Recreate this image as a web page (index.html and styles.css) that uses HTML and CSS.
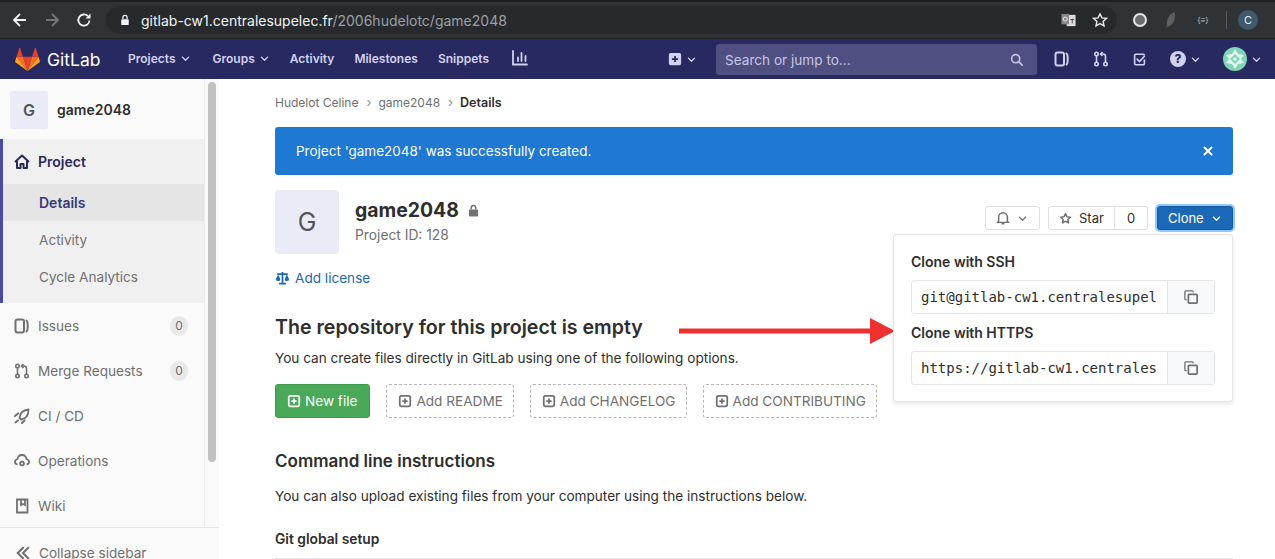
FILE: index.html
```html
<!DOCTYPE html>
<html lang="en">
<head>
    <meta charset="UTF-8">
    <meta name="viewport" content="width=device-width, initial-scale=1.0">
    <title>game2048 - Details</title>
    <link rel="stylesheet" href="styles.css">
</head>
<body>
    <svg class="sprite" width="0" height="0">
        <symbol id="i-chevron" viewBox="0 0 16 16"><path d="M3.500 6 8 10.500 12.500 6" fill="none" stroke="currentColor" stroke-width="2" stroke-linecap="round" stroke-linejoin="round"/></symbol>
        <symbol id="i-issues" viewBox="0 0 16 16"><rect x="1.500" y="1.500" width="8.500" height="13" rx="2" fill="none" stroke="currentColor" stroke-width="2"/><path d="M12.500 2.500c1.600 1 1.600 10 0 11" fill="none" stroke="currentColor" stroke-width="2" stroke-linecap="round"/></symbol>
        <symbol id="i-mr" viewBox="0 0 16 16"><g fill="none" stroke="currentColor" stroke-width="1.600"><circle cx="3.500" cy="13" r="1.700"/><circle cx="3.500" cy="3" r="1.700"/><circle cx="12.500" cy="13" r="1.700"/><path d="M3.500 5v6M12.500 11V5.500c0-1.500-1-2.500-2.500-2.500H8"/><path d="M9.500 1 7.500 3l2 2"/></g></symbol>
        <symbol id="i-todo" viewBox="0 0 16 16"><path d="M14 3a1.500 1.500 0 0 0-1.500-1.500h-9A1.500 1.500 0 0 0 2 3v10a1.500 1.500 0 0 0 1.500 1.500h9A1.500 1.500 0 0 0 14 13V8" fill="none" stroke="currentColor" stroke-width="2"/><path d="m5 7.500 3 3 6-6.500" fill="none" stroke="currentColor" stroke-width="2" stroke-linecap="round"/></symbol>
        <symbol id="i-plus-box" viewBox="0 0 16 16"><path fill-rule="evenodd" fill="currentColor" d="M3 1h10a2 2 0 0 1 2 2v10a2 2 0 0 1-2 2H3a2 2 0 0 1-2-2V3a2 2 0 0 1 2-2zm4 3.500V7H4.500v2H7v2.500h2V9h2.500V7H9V4.500z"/></symbol>
        <symbol id="i-plus-outline" viewBox="0 0 16 16"><rect x="2" y="2" width="12" height="12" rx="2" fill="none" stroke="currentColor" stroke-width="2"/><path d="M8 5v6M5 8h6" stroke="currentColor" stroke-width="2"/></symbol>
        <symbol id="i-copy" viewBox="0 0 16 16"><path d="M10.500 2.500V2a1 1 0 0 0-1-1H2a1 1 0 0 0-1 1v8a1 1 0 0 0 1 1h1" fill="none" stroke="currentColor" stroke-width="1.500"/><rect x="5" y="5" width="10" height="10" rx="1" fill="none" stroke="currentColor" stroke-width="2"/></symbol>
    </svg>

    <div class="browser-top"></div>
    <div class="browser-bar">
        <svg class="b-icon" viewBox="0 0 16 16"><path d="M14 8H2.500M8 2 2 8l6 6" fill="none" stroke="#f1f3f4" stroke-width="1.800"/></svg>
        <svg class="b-icon b-off" viewBox="0 0 16 16"><path d="M2 8h11.500M8 2l6 6-6 6" fill="none" stroke="#73777a" stroke-width="1.800"/></svg>
        <svg class="b-icon" viewBox="0 0 16 16"><path d="M13.500 8.500A5.600 5.600 0 1 1 11.800 4" fill="none" stroke="#f1f3f4" stroke-width="1.800"/><path d="M14.500 1.500v5h-5z" fill="#f1f3f4"/></svg>
        <div class="omnibox">
            <svg class="lock" viewBox="0 0 12 14"><path d="M3.500 6V4a2.500 2.500 0 0 1 5 0v2" fill="none" stroke="#f1f3f4" stroke-width="1.500"/><rect x="1.500" y="6" width="9" height="7" rx="1" fill="#f1f3f4"/></svg>
            <span class="url">gitlab-cw1.centralesupelec.fr<span class="url-path">/2006hudelotc/game2048</span></span>
            <svg class="translate" viewBox="0 0 16 16"><rect x="6" y="2" width="9.500" height="12" fill="#ddd"/><rect x="0.500" y="1" width="8" height="11" fill="#888"/><circle cx="4.500" cy="6.500" r="2.200" fill="none" stroke="#eee"/><path d="M10 7h4M12 6v5" stroke="#444"/></svg>
            <svg class="star" viewBox="0 0 16 16"><path d="m8 1.800 1.900 4.100 4.500.5-3.300 3 .9 4.400L8 11.600l-4 2.200.9-4.400-3.300-3 4.500-.5z" fill="none" stroke="#e8eaed" stroke-width="1.400"/></svg>
        </div>
        <div class="extensions">
            <span class="ext-ball"></span>
            <svg class="ext-leaf" viewBox="0 0 12 18"><path d="M9.500 1C4 3 1 9 2 15l-1 2 2-1.500C9 14 11 7 9.500 1z" fill="#5d6062"/></svg>
            <span class="ext-json">{≡}</span>
            <span class="ext-sep"></span>
            <span class="ext-user">C</span>
        </div>
    </div>

    <header class="navbar">
        <a class="brand">
            <svg class="tanuki" viewBox="0 0 210 194">
                <path d="M105.060 193.660l38.640-118.920H66.420z" fill="#e24329"/>
                <path d="M105.060 193.655L66.420 74.740H12.270z" fill="#fc6d26"/>
                <path d="M12.270 74.730L.53 110.870c-1.070 3.300.1 6.910 2.900 8.950l101.630 73.840z" fill="#fca326"/>
                <path d="M12.270 74.730h54.150L43.150 3.130c-1.200-3.690-6.400-3.690-7.600 0z" fill="#e24329"/>
                <path d="M105.060 193.660l38.640-118.920h54.150z" fill="#fc6d26"/>
                <path d="M197.850 74.730l11.740 36.140c1.070 3.300-.1 6.910-2.900 8.950L105.060 193.660z" fill="#fca326"/>
                <path d="M197.850 74.740H143.700l23.270-71.620c1.200-3.690 6.400-3.690 7.600 0z" fill="#e24329"/>
            </svg>
            <span>GitLab</span>
        </a>
        <nav class="nav-links">
            <a class="nav-first">Projects <svg class="chev"><use href="#i-chevron"/></svg></a>
            <a>Groups <svg class="chev"><use href="#i-chevron"/></svg></a>
            <a>Activity</a>
            <a>Milestones</a>
            <a>Snippets</a>
            <svg class="nav-chart" viewBox="0 0 16 16"><path d="M1 1v13.500h14M6 7.500v3.500M9.500 3v8M13.500 6v5" fill="none" stroke="currentColor" stroke-width="1.800" stroke-linecap="round"/></svg>
        </nav>
        <div class="nav-right">
            <span class="nav-new"><svg class="nav-icon"><use href="#i-plus-box"/></svg><svg class="chev"><use href="#i-chevron"/></svg></span>
            <div class="search">
                <span>Search or jump to...</span>
                <svg class="search-icon" viewBox="0 0 16 16"><circle cx="7" cy="7" r="5" fill="none" stroke="currentColor" stroke-width="2"/><path d="m11 11 4 4" stroke="currentColor" stroke-width="2" stroke-linecap="round"/></svg>
            </div>
            <svg class="nav-icon tool"><use href="#i-issues"/></svg>
            <svg class="nav-icon tool tool-mr"><use href="#i-mr"/></svg>
            <svg class="nav-icon tool tool-todo"><use href="#i-todo"/></svg>
            <span class="nav-help"><span class="help-ball">?</span><svg class="chev"><use href="#i-chevron"/></svg></span>
            <span class="nav-user">
                <svg class="identicon" viewBox="0 0 24 24"><circle cx="12" cy="12" r="12" fill="#7fd6b4"/><path d="M12 2l3 5 6 1-3 4 3 4-6 1-3 5-3-5-6-1 3-4-3-4 6-1z" fill="#e4f6ee"/><path d="M12 7l5 5-5 5-5-5z" fill="#7fd6b4"/><circle cx="12" cy="12" r="1.800" fill="#e4f6ee"/></svg>
                <svg class="chev"><use href="#i-chevron"/></svg>
            </span>
        </div>
    </header>

    <div class="layout">
        <aside class="sidebar">
            <div class="sidebar-scroll">
                <div class="sidebar-list">
                    <div class="context">
                        <span class="avatar-sm">G</span>
                        <span class="context-name">game2048</span>
                    </div>
                    <div class="section-active">
                        <a class="section-title">
                            <svg class="side-icon" viewBox="0 0 16 16"><path d="M1 8 8 1.500 15 8M3 6.500V14h3.500v-4h3v4H13V6.500" fill="none" stroke="currentColor" stroke-width="2" stroke-linejoin="round"/></svg>
                            Project
                        </a>
                        <a class="sub-item current">Details</a>
                        <a class="sub-item">Activity</a>
                        <a class="sub-item">Cycle Analytics</a>
                    </div>
                    <a class="side-item"><svg class="side-icon"><use href="#i-issues"/></svg>Issues<span class="pill">0</span></a>
                    <a class="side-item"><svg class="side-icon"><use href="#i-mr"/></svg>Merge Requests<span class="pill">0</span></a>
                    <a class="side-item">
                        <svg class="side-icon" viewBox="0 0 16 16"><path d="M14.500 1.500C9 2 6 5 5.500 10L7 11.500c5-.5 7.500-4 7.500-10z" fill="none" stroke="currentColor" stroke-width="1.800"/><path d="M1 8l3-2.500M8 15l2.500-2.500M1.500 14.500l2.500-2" stroke="currentColor" stroke-width="2" stroke-linecap="round"/></svg>
                        CI / CD
                    </a>
                    <a class="side-item">
                        <svg class="side-icon" viewBox="0 0 16 16"><path d="M3.500 11.500C1.500 11 1 9.500 1 9c0-1.500 1-2.500 2.500-3C4 3.500 6 2 8 2s4 1.500 4.500 4c1.500.5 2.500 1.500 2.500 3 0 .5-.5 2-2.500 2.500" fill="none" stroke="currentColor" stroke-width="1.800"/><circle cx="8" cy="10.500" r="2.800" fill="currentColor"/><circle cx="8" cy="10.500" r="1" fill="#fafafa"/></svg>
                        Operations
                    </a>
                    <a class="side-item">
                        <svg class="side-icon" viewBox="0 0 16 16"><path d="M3 1.500h10.500v13H3zM7 1.500V7l2-1 2 1V1.500" fill="none" stroke="currentColor" stroke-width="1.800"/></svg>
                        Wiki
                    </a>
                </div>
                <div class="side-scrollbar"><span class="side-thumb"></span></div>
            </div>
            <a class="collapse">
                <svg class="collapse-icon" viewBox="0 0 16 16"><path d="M8 2 2 8l6 6M14 2 8 8l6 6" fill="none" stroke="currentColor" stroke-width="2.400" stroke-linecap="round"/></svg>
                Collapse sidebar
            </a>
        </aside>

        <main class="content">
            <div class="breadcrumbs">
                <a>Hudelot Celine</a><span class="crumb-sep">›</span><a>game2048</a><span class="crumb-sep">›</span><b>Details</b>
            </div>
            <div class="alert">
                <span>Project 'game2048' was successfully created.</span>
                <svg class="alert-close" viewBox="0 0 12 12"><path d="m2 2 8 8M10 2l-8 8" stroke="#fff" stroke-width="2"/></svg>
            </div>

            <div class="project-head">
                <div class="project-info">
                    <span class="avatar-lg">G</span>
                    <div>
                        <h1 class="project-title">game2048
                            <svg class="title-lock" viewBox="0 0 12 14"><path d="M3.500 6V4a2.500 2.500 0 0 1 5 0v2" fill="none" stroke="currentColor" stroke-width="1.600"/><rect x="1" y="6" width="10" height="7.500" rx="1" fill="currentColor"/></svg>
                        </h1>
                        <p class="project-id">Project ID: 128</p>
                    </div>
                </div>
                <div class="project-actions">
                    <button class="btn btn-bell">
                        <svg class="btn-icon" viewBox="0 0 16 16"><path d="M3 12V7a5 5 0 0 1 10 0v5l1.500 1h-13zM6.500 14.500h3" fill="none" stroke="currentColor" stroke-width="1.700" stroke-linejoin="round"/></svg>
                        <svg class="chev"><use href="#i-chevron"/></svg>
                    </button>
                    <div class="star-group">
                        <button class="btn btn-star">
                            <svg class="btn-icon" viewBox="0 0 16 16"><path d="m8 2 1.800 3.900 4.200.5-3.100 2.900.8 4.200L8 11.400l-3.700 2.100.8-4.200L2 6.400l4.200-.5z" fill="none" stroke="currentColor" stroke-width="1.800" stroke-linejoin="round"/></svg>
                            Star
                        </button>
                        <span class="star-count">0</span>
                    </div>
                    <div class="clone-wrap">
                        <button class="btn btn-clone">Clone <svg class="chev"><use href="#i-chevron"/></svg></button>
                        <div class="clone-menu">
                            <label>Clone with SSH</label>
                            <div class="copy-field">
                                <span class="copy-text">git@gitlab-cw1.centralesupel</span>
                                <span class="copy-btn"><svg><use href="#i-copy"/></svg></span>
                            </div>
                            <label>Clone with HTTPS</label>
                            <div class="copy-field">
                                <span class="copy-text">https://gitlab-cw1.centrales</span>
                                <span class="copy-btn"><svg><use href="#i-copy"/></svg></span>
                            </div>
                        </div>
                    </div>
                </div>
            </div>

            <a class="add-license">
                <svg class="license-icon" viewBox="0 0 16 16"><path d="M8 1v13M4 14.500h8M2 3.500h12" stroke="currentColor" stroke-width="2"/><path d="M0.500 9 3 4l2.500 5a2.500 2.500 0 0 1-5 0zM10.500 9 13 4l2.500 5a2.500 2.500 0 0 1-5 0z" fill="currentColor"/></svg>
                Add license
            </a>

            <h2 class="empty-title">The repository for this project is empty</h2>
            <p class="empty-text">You can create files directly in GitLab using one of the following options.</p>
            <div class="file-actions">
                <a class="file-btn file-new"><svg><use href="#i-plus-outline"/></svg>New file</a>
                <a class="file-btn"><svg><use href="#i-plus-outline"/></svg>Add README</a>
                <a class="file-btn"><svg><use href="#i-plus-outline"/></svg>Add CHANGELOG</a>
                <a class="file-btn"><svg><use href="#i-plus-outline"/></svg>Add CONTRIBUTING</a>
            </div>

            <h3 class="cli-title">Command line instructions</h3>
            <p class="cli-text">You can also upload existing files from your computer using the instructions below.</p>
            <h4 class="setup-title">Git global setup</h4>
            <div class="setup-box"></div>
        </main>
    </div>

    <svg class="red-arrow" viewBox="0 0 216 26"><path d="M0 10.500h191V0l25 13-25 13V15.500H0z" fill="#ee3030"/></svg>
</body>
</html>
```

FILE: styles.css
```css
* {
    box-sizing: border-box;
}
html, body {
    height: 559px;
}
body {
    margin: 0;
    overflow: hidden;
    position: relative;
    font-family: Inter, "Noto Sans", sans-serif;
    font-size: 13.600px;
    color: #2e2e2e;
    background: #fff;
}
.sprite {
    position: absolute;
}
h1, h2, h3, h4, p {
    margin: 0;
}

/* browser chrome */
.browser-top {
    height: 2px;
    background: #1d1f21;
}
.browser-bar {
    height: 37px;
    display: flex;
    align-items: center;
    padding: 0 17px 0 12px;
    background: #303336;
    border-bottom: 1px solid #222;
}
.b-icon {
    width: 16px;
    height: 16px;
    margin-right: 16px;
    flex: none;
}
.omnibox {
    flex: 1;
    height: 28px;
    margin-left: -2px;
    display: flex;
    align-items: center;
    padding: 0 9px 0 14px;
    background: #272a2d;
    border-radius: 14px;
}
.lock {
    width: 10px;
    height: 12px;
    margin-right: 11px;
}
.url {
    flex: 1;
    font-size: 14px;
    color: #f1f3f4;
    white-space: nowrap;
}
.url-path {
    color: #9aa0a6;
}
.translate {
    width: 15px;
    height: 15px;
    margin-right: 16px;
}
.star {
    width: 16px;
    height: 16px;
}
.extensions {
    display: flex;
    align-items: center;
    margin-left: 16px;
}
.ext-ball {
    width: 14px;
    height: 14px;
    border-radius: 50%;
    background: #6a6d70;
    border: 2px solid #e4e6e8;
}
.ext-leaf {
    width: 12px;
    height: 18px;
    margin-left: 18px;
}
.ext-json {
    width: 24px;
    margin-left: 14px;
    font-size: 8px;
    color: #bbb;
    text-align: center;
}
.ext-sep {
    width: 1px;
    height: 18px;
    margin-left: 11px;
    background: #55585b;
}
.ext-user {
    width: 20px;
    height: 20px;
    margin-left: 11px;
    border-radius: 50%;
    background: #3f5a6c;
    color: #e8eaed;
    font-size: 11px;
    line-height: 20px;
    text-align: center;
}

/* gitlab navbar */
.navbar {
    height: 40px;
    display: flex;
    align-items: center;
    padding: 0 13px 0 15px;
    background: #292961;
    color: #d1d1f0;
}
.brand {
    display: flex;
    align-items: center;
    width: 113px;
    color: #fff;
    font-size: 17.500px;
}
.tanuki {
    width: 25px;
    height: 23px;
    margin-right: 7px;
}
.nav-links {
    display: flex;
    align-items: center;
    padding-bottom: 2px;
    font-size: 12px;
    font-weight: 600;
}
.nav-links a {
    display: flex;
    align-items: center;
    margin-right: 20px;
    white-space: nowrap;
}
.nav-links .nav-first {
    margin-right: 22px;
}
.chev {
    width: 11px;
    height: 11px;
    margin-left: 4px;
    flex: none;
}
.nav-chart {
    width: 16px;
    height: 16px;
    margin-left: 3px;
}
.nav-right {
    margin-left: auto;
    display: flex;
    align-items: center;
}
.nav-new, .nav-help, .nav-user {
    display: flex;
    align-items: center;
}
.nav-icon {
    width: 14px;
    height: 14px;
    color: #d1d1f0;
}
.search {
    width: 321px;
    height: 31px;
    margin: 0 17px 0 19px;
    padding: 1px 14px 0 9px;
    display: flex;
    align-items: center;
    justify-content: space-between;
    background: #4f4f82;
    border-radius: 3px;
    color: #c6c6e6;
    font-size: 13.600px;
}
.search-icon {
    width: 13px;
    height: 13px;
}
.tool {
    width: 16px;
    height: 16px;
    margin-right: 23px;
}
.tool-mr {
    margin-right: 22px;
}
.tool-todo {
    width: 13px;
    height: 13px;
    margin: 0 24px 0 2px;
}
.help-ball {
    width: 16px;
    height: 16px;
    border-radius: 50%;
    background: #d1d1f0;
    color: #292961;
    font-size: 12px;
    font-weight: 800;
    line-height: 16px;
    text-align: center;
}
.nav-help {
    margin-right: 22px;
}
.identicon {
    width: 24px;
    height: 24px;
}

/* page layout */
.layout {
    height: 480px;
    display: flex;
}
.sidebar {
    width: 219px;
    flex: none;
    display: flex;
    flex-direction: column;
    background: #fafafa;
}
.sidebar-scroll {
    flex: 1;
    display: flex;
    min-height: 0;
}
.sidebar-list {
    width: 205px;
    border-right: 1px solid #ececec;
}
.side-scrollbar {
    flex: 1;
    padding: 3px 3px 0 3px;
}
.side-thumb {
    display: block;
    width: 8px;
    height: 380px;
    border-radius: 4px;
    background: #c1c1c1;
}
.context {
    height: 60px;
    display: flex;
    align-items: center;
    padding: 1px 0 0 10px;
}
.avatar-sm {
    width: 38px;
    height: 38px;
    margin-right: 9px;
    background: #e9ebf6;
    border-radius: 3px;
    color: #555;
    font-size: 16px;
    font-weight: 600;
    line-height: 38px;
    text-align: center;
}
.context-name {
    font-size: 14px;
    font-weight: 600;
    color: #2e2e2e;
}
.section-active {
    height: 164px;
    background: #f0f0f0;
    border-left: 3px solid #4b4ba3;
}
.section-title {
    height: 45px;
    display: flex;
    align-items: center;
    padding-left: 11px;
    font-size: 14px;
    font-weight: 600;
    color: #292961;
}
.section-title .side-icon {
    color: #292961;
    margin-right: 8px;
}
.sub-item {
    display: block;
    height: 37px;
    padding: 1px 0 0 36px;
    line-height: 37px;
    color: #707070;
}
.current {
    padding-top: 0;
    background: #e5e5e5;
    color: #38387e;
    font-size: 14px;
    font-weight: 600;
}
.side-icon {
    width: 16px;
    height: 16px;
    margin-right: 8px;
    color: #707070;
    flex: none;
}
.side-item {
    height: 45px;
    display: flex;
    align-items: center;
    padding: 0 16px 0 14px;
    color: #707070;
}
.pill {
    width: 18px;
    height: 20px;
    margin-left: auto;
    border-radius: 10px;
    background: #e9e9e9;
    color: #707070;
    font-size: 12px;
    line-height: 20px;
    text-align: center;
}
.collapse {
    height: 32px;
    flex: none;
    display: flex;
    align-items: center;
    padding: 18px 0 0 16px;
    border-top: 1px solid #e5e5e5;
    color: #707070;
}
.collapse-icon {
    width: 14px;
    height: 14px;
    margin-right: 9px;
}

/* main content */
.content {
    flex: 1;
    min-width: 0;
    padding: 0 42px 0 56px;
}
.breadcrumbs {
    height: 48px;
    padding-bottom: 2px;
    display: flex;
    align-items: center;
    font-size: 12px;
    color: #707070;
}
.breadcrumbs b {
    font-size: 12.500px;
    font-weight: 600;
    color: #2e2e2e;
}
.crumb-sep {
    margin: 0 7px 0 8px;
    font-size: 13px;
    color: #909090;
}
.alert {
    height: 48px;
    display: flex;
    align-items: center;
    justify-content: space-between;
    padding: 0 19px 0 21px;
    background: #1f78d1;
    border-radius: 3px;
    color: #fff;
    font-size: 13.500px;
}
.alert-close {
    width: 12px;
    height: 12px;
}
.project-head {
    display: flex;
    justify-content: space-between;
    margin-top: 15px;
}
.project-info {
    display: flex;
}
.avatar-lg {
    width: 64px;
    height: 64px;
    margin-right: 16px;
    background: #e9ebf6;
    border-radius: 4px;
    color: #555;
    font-size: 25px;
    line-height: 64px;
    text-align: center;
}
.project-title {
    display: flex;
    align-items: center;
    height: 24px;
    margin-top: 8px;
    font-size: 19.400px;
    font-weight: 700;
}
.title-lock {
    width: 11px;
    height: 13px;
    margin-left: 9px;
    color: #707070;
}
.project-id {
    margin-top: 5px;
    font-size: 13.800px;
    color: #707070;
}
.project-actions {
    display: flex;
    align-items: flex-start;
    margin-top: 16px;
}
.btn {
    height: 24px;
    display: flex;
    align-items: center;
    padding: 0 10px;
    font: inherit;
    font-size: 12px;
    color: #2e2e2e;
    background: #fff;
    border: 1px solid #dfdfdf;
    border-radius: 3px;
}
.btn-bell {
    width: 55px;
    margin-right: 8px;
    color: #707070;
}
.btn-bell .btn-icon {
    margin-right: 3px;
}
.btn-icon {
    width: 14px;
    height: 14px;
    color: #707070;
}
.star-group {
    display: flex;
    margin-right: 9px;
}
.btn-star {
    width: 67px;
    font-size: 13px;
    border-radius: 3px 0 0 3px;
}
.btn-star .btn-icon {
    width: 13px;
    height: 13px;
    margin-right: 7px;
}
.star-count {
    width: 33px;
    height: 24px;
    background: #fff;
    border: 1px solid #dfdfdf;
    border-left: 0;
    border-radius: 0 3px 3px 0;
    font-size: 13px;
    line-height: 22px;
    text-align: center;
}
.clone-wrap {
    position: relative;
}
.btn-clone {
    width: 76px;
    font-size: 13px;
    color: #fff;
    background: #1b69b6;
    border-color: #17599c;
    box-shadow: 0 0 0 2px #8fc7ff;
}
.btn-clone .chev {
    margin-left: 7px;
}
.clone-menu {
    position: absolute;
    top: 28px;
    right: 0;
    width: 340px;
    height: 168px;
    padding: 18px 17px 0;
    background: #fff;
    border: 1px solid #e5e5e5;
    border-radius: 3px;
    box-shadow: 0 2px 4px rgba(0, 0, 0, 0.1);
    z-index: 2;
}
.clone-menu label {
    display: block;
    height: 17px;
    margin-bottom: 10px;
    font-size: 14px;
    font-weight: 600;
    line-height: 17px;
}
.copy-field {
    width: 304px;
    height: 34px;
    margin-bottom: 10px;
    display: flex;
    background: #fff;
    border: 1px solid #e5e5e5;
    border-radius: 3px;
}
.copy-text {
    flex: 1;
    min-width: 0;
    white-space: nowrap;
    padding: 0 9px;
    font-family: "DejaVu Sans Mono", monospace;
    font-size: 14px;
    line-height: 32px;
    color: #2e2e2e;
}
.copy-btn {
    width: 47px;
    flex: none;
    display: flex;
    align-items: center;
    justify-content: center;
    background: #f8f9fa;
    border-left: 1px solid #e5e5e5;
    color: #707070;
}
.copy-btn svg {
    width: 14px;
    height: 14px;
}
.add-license {
    display: flex;
    align-items: center;
    height: 18px;
    margin-top: 15px;
    color: #1b69b6;
}
.license-icon {
    width: 15px;
    height: 14px;
    margin-right: 5px;
}
.empty-title {
    margin-top: 28px;
    font-size: 19.600px;
    font-weight: 600;
    line-height: 24px;
}
.empty-text {
    margin-top: 10px;
    line-height: 18px;
}
.file-actions {
    display: flex;
    margin-top: 17px;
}
.file-btn {
    height: 34px;
    display: flex;
    align-items: center;
    margin-right: 16px;
    padding: 0 10px 0 11px;
    border: 1px dashed #b5b5b5;
    border-radius: 3px;
    color: #707070;
    white-space: nowrap;
}
.file-btn svg {
    width: 14px;
    height: 14px;
    margin-right: 4px;
}
.file-new {
    padding-right: 12px;
    color: #fff;
    background: #4aa958;
    border: 1px solid #3f9a4d;
}
.cli-title {
    margin-top: 33px;
    font-size: 17px;
    font-weight: 600;
    line-height: 20px;
}
.cli-text {
    margin-top: 16px;
    line-height: 18px;
}
.setup-title {
    margin-top: 26px;
    font-size: 13.800px;
    font-weight: 600;
    line-height: 17px;
}
.setup-box {
    height: 1px;
    margin-top: 10px;
    background: #e5e5e5;
}

/* annotation drawn over the screenshot */
.red-arrow {
    position: absolute;
    left: 679px;
    top: 318px;
    width: 216px;
    height: 26px;
}
```
